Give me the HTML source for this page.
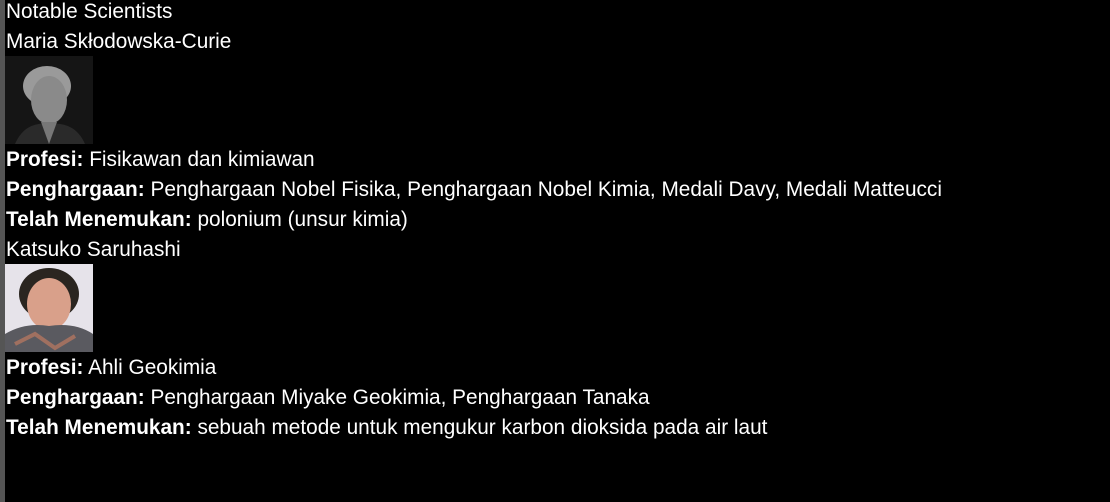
<!DOCTYPE html>
<html><head><meta charset="utf-8"><style>
html,body{margin:0;padding:0;background:#000;width:1110px;height:502px;overflow:hidden}
body{position:relative;font-family:"Liberation Sans",sans-serif;color:#fff;font-size:20.8px}
.bar{position:absolute;left:0;top:0;width:5px;height:502px;background:#555}
.l{position:absolute;left:6px;height:30px;line-height:30px;white-space:nowrap}
b{font-weight:bold}
.img{position:absolute;left:5px;width:88px;height:88px;overflow:hidden}
</style></head><body>
<div class="bar"></div>
<div class="l" style="top:-3px">Notable Scientists</div>
<div class="l" style="top:27px">Maria Skłodowska-Curie</div>
<div class="img" style="top:56px;background:#111">
<svg width="88" height="88"><rect width="88" height="88" fill="#151515"/>
<ellipse cx="42" cy="30" rx="24" ry="20" fill="#9a9a9a"/>
<ellipse cx="44" cy="44" rx="18" ry="24" fill="#8a8a8a"/>
<path d="M10 88 Q20 65 44 68 Q70 65 80 88Z" fill="#2a2a2a"/>
<path d="M36 66 L44 88 L52 66Z" fill="#777"/></svg></div>
<div class="l" style="top:145px"><b>Profesi:</b> Fisikawan dan kimiawan</div>
<div class="l" style="top:175px"><b>Penghargaan:</b> Penghargaan Nobel Fisika, Penghargaan Nobel Kimia, Medali Davy, Medali Matteucci</div>
<div class="l" style="top:205px"><b>Telah Menemukan:</b> polonium (unsur kimia)</div>
<div class="l" style="top:235px">Katsuko Saruhashi</div>
<div class="img" style="top:264px">
<svg width="88" height="88"><rect width="88" height="88" fill="#e6e3ea"/>
<ellipse cx="44" cy="30" rx="30" ry="26" fill="#2a2520"/>
<ellipse cx="44" cy="40" rx="22" ry="26" fill="#d9a08a"/>
<path d="M0 88 L0 70 Q20 58 44 62 Q70 58 88 70 L88 88Z" fill="#5a5a60"/>
<path d="M10 80 L30 70 L50 84 L70 72" stroke="#a07060" stroke-width="4" fill="none"/></svg></div>
<div class="l" style="top:353px"><b>Profesi:</b> Ahli Geokimia</div>
<div class="l" style="top:383px"><b>Penghargaan:</b> Penghargaan Miyake Geokimia, Penghargaan Tanaka</div>
<div class="l" style="top:413px"><b>Telah Menemukan:</b> sebuah metode untuk mengukur karbon dioksida pada air laut</div>
</body></html>
